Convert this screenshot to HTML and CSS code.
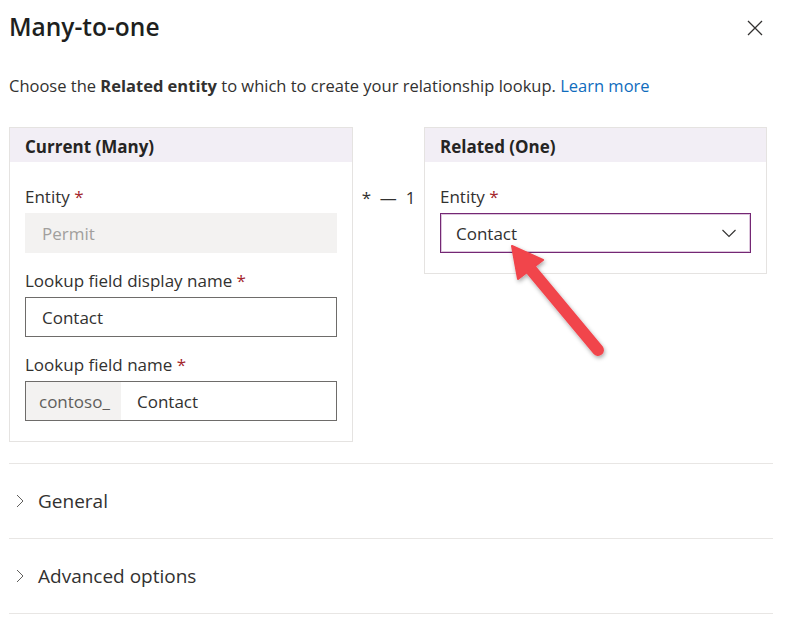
FILE: index.html
```html
<!DOCTYPE html>
<html lang="en">
<head>
<meta charset="utf-8">
<title>Many-to-one</title>
<link rel="stylesheet" href="styles.css">
</head>
<body>
<div class="panel">
  <div class="title-row">
    <h1 class="title">Many-to-one</h1>
    <button class="close" aria-label="Close">
      <svg width="16" height="16" viewBox="0 0 16 16"><path d="M1 1 L15 15 M15 1 L1 15" stroke="#323130" stroke-width="1.3" fill="none"/></svg>
    </button>
  </div>
  <p class="desc">Choose the <b>Related entity</b> to which to create your relationship lookup. <a class="link" href="#">Learn more</a></p>

  <div class="cards">
    <section class="card">
      <div class="card-head">Current (Many)</div>
      <div class="card-body">
        <div class="field">
          <label class="label">Entity <span class="req">*</span></label>
          <div class="input disabled">Permit</div>
        </div>
        <div class="field">
          <label class="label">Lookup field display name <span class="req">*</span></label>
          <div class="input">Contact</div>
        </div>
        <div class="field">
          <label class="label">Lookup field name <span class="req">*</span></label>
          <div class="input prefixed"><span class="prefix">contoso_</span><span class="value">Contact</span></div>
        </div>
      </div>
    </section>

    <div class="connector">*&nbsp;&nbsp;—&nbsp;&nbsp;1</div>

    <section class="card card-related">
      <div class="card-head">Related (One)</div>
      <div class="card-body">
        <div class="field">
          <label class="label">Entity <span class="req">*</span></label>
          <div class="input dropdown"><span>Contact</span>
            <svg width="16" height="9" viewBox="0 0 16 9"><path d="M1.5 1 L8 7.5 L14.5 1" stroke="#323130" stroke-width="1.1" fill="none"/></svg>
          </div>
        </div>
      </div>
    </section>
  </div>

  <div class="accordion">
    <div class="acc-row">
      <svg class="chev" width="8" height="14" viewBox="0 0 8 14"><path d="M1 1 L7 7 L1 13" stroke="#605e5c" stroke-width="1" fill="none"/></svg>
      <span>General</span>
    </div>
    <div class="acc-row">
      <svg class="chev" width="8" height="14" viewBox="0 0 8 14"><path d="M1 1 L7 7 L1 13" stroke="#605e5c" stroke-width="1" fill="none"/></svg>
      <span>Advanced options</span>
    </div>
  </div>
</div>

<svg class="annot" width="794" height="623" viewBox="0 0 794 623">
  <defs>
    <filter id="sh" x="-20%" y="-20%" width="140%" height="140%">
      <feDropShadow dx="1" dy="2" stdDeviation="2" flood-color="#000" flood-opacity="0.35"/>
    </filter>
  </defs>
  <g filter="url(#sh)" fill="#f1444c" stroke="#f1444c">
    <line x1="598" y1="350" x2="528" y2="266" stroke-width="12" stroke-linecap="round"/>
    <polygon points="512,246 543,260 518,279" stroke-width="2" stroke-linejoin="round"/>
  </g>
</svg>
</body>
</html>
```

FILE: styles.css
```css
* { box-sizing: border-box; }
html, body { margin: 0; padding: 0; background: #fff; }
body {
  font-family: "Open Sans", "Noto Sans", sans-serif;
  color: #323130;
  font-size: 17px;
  position: relative;
  width: 794px;
  height: 623px;
  overflow: hidden;
}
.panel { padding: 0 21px 0 9px; }
.title-row {
  display: flex;
  justify-content: space-between;
  align-items: flex-start;
}
.title {
  margin: 10px 0 0 0;
  font-size: 24.5px;
  line-height: 34px;
  font-weight: 600;
  color: #201f1e;
}
.close {
  margin: 20px 10px 0 0;
  padding: 0;
  border: 0;
  background: none;
  width: 16px;
  height: 16px;
  display: block;
}
.close svg { display: block; }
.desc {
  margin: 30px 0 0 0;
  line-height: 24px;
  font-size: 16.5px;
}
.desc b { font-weight: 700; }
.link { color: #0f6cbd; text-decoration: none; }
.cards {
  margin-top: 29px;
  display: flex;
  align-items: flex-start;
}
.card {
  width: 344px;
  border: 1px solid #e5e3e1;
}
.card-related { width: 343px; }
.card-head {
  height: 34px;
  line-height: 34px;
  padding: 2px 15px 0 15px;
  background: #f2eef5;
  font-weight: 700;
  color: #252423;
}
.card-body {
  padding: 24px 15px 20px 15px;
  display: flex;
  flex-direction: column;
  gap: 17px;
}
.field { display: flex; flex-direction: column; }
.label {
  line-height: 22px;
  margin-bottom: 5px;
}
.req { color: #a4262c; }
.input {
  height: 40px;
  border: 1px solid #6e6c6a;
  display: flex;
  align-items: center;
  padding: 0 16px;
  color: #323130;
  background: #fff;
}
.input.disabled {
  border-color: #f3f2f1;
  background: #f3f2f1;
  color: #a19f9d;
}
.input.prefixed { padding: 0; }
.prefix {
  height: 100%;
  display: flex;
  align-items: center;
  background: #f3f2f1;
  color: #605e5c;
  padding: 0 12px 0 13px;
  width: 95px;
}
.value { padding-left: 16px; }
.dropdown {
  justify-content: space-between;
  border-color: #742774;
  box-shadow: inset 0 0 0 1px #dcc6dc;
  padding: 0 13px 0 15px;
}
.dropdown svg { display: block; }
.connector {
  width: 71px;
  text-align: center;
  padding-top: 60px;
  line-height: 22px;
  color: #323130;
  white-space: nowrap;
}
.accordion {
  margin-top: 21px;
  border-bottom: 1px solid #e8e6e4;
}
.acc-row {
  height: 75px;
  border-top: 1px solid #e8e6e4;
  display: flex;
  align-items: center;
  font-size: 19px;
  color: #323130;
}
.chev { margin: 0 14px 0 7px; display: block; }
.annot {
  position: absolute;
  left: 0;
  top: 0;
  pointer-events: none;
}
```
